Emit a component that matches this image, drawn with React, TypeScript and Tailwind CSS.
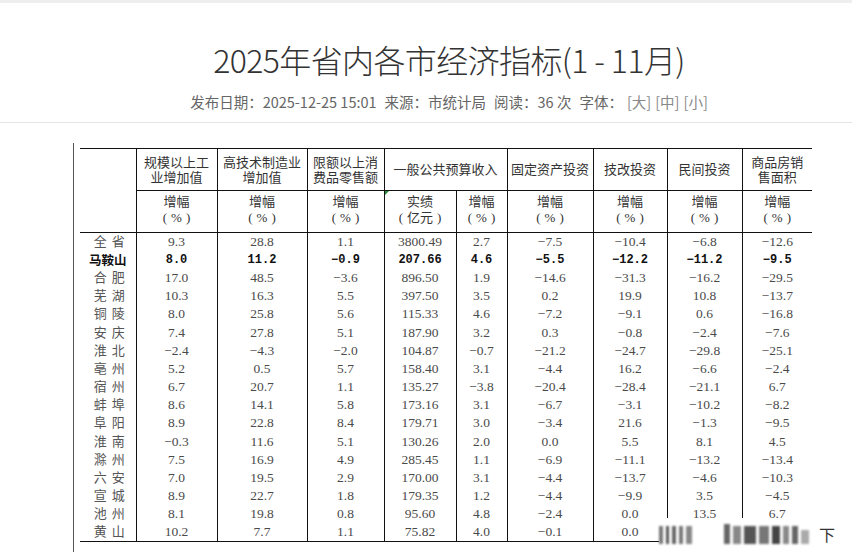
import React from 'react';

type Row = { city: string; vals: string[]; bold?: boolean };

const rows: Row[] = [
  { city: '全省', vals: ['9.3', '28.8', '1.1', '3800.49', '2.7', '−7.5', '−10.4', '−6.8', '−12.6'] },
  { city: '马鞍山', vals: ['8.0', '11.2', '−0.9', '207.66', '4.6', '−5.5', '−12.2', '−11.2', '−9.5'], bold: true },
  { city: '合肥', vals: ['17.0', '48.5', '−3.6', '896.50', '1.9', '−14.6', '−31.3', '−16.2', '−29.5'] },
  { city: '芜湖', vals: ['10.3', '16.3', '5.5', '397.50', '3.5', '0.2', '19.9', '10.8', '−13.7'] },
  { city: '铜陵', vals: ['8.0', '25.8', '5.6', '115.33', '4.6', '−7.2', '−9.1', '0.6', '−16.8'] },
  { city: '安庆', vals: ['7.4', '27.8', '5.1', '187.90', '3.2', '0.3', '−0.8', '−2.4', '−7.6'] },
  { city: '淮北', vals: ['−2.4', '−4.3', '−2.0', '104.87', '−0.7', '−21.2', '−24.7', '−29.8', '−25.1'] },
  { city: '亳州', vals: ['5.2', '0.5', '5.7', '158.40', '3.1', '−4.4', '16.2', '−6.6', '−2.4'] },
  { city: '宿州', vals: ['6.7', '20.7', '1.1', '135.27', '−3.8', '−20.4', '−28.4', '−21.1', '6.7'] },
  { city: '蚌埠', vals: ['8.6', '14.1', '5.8', '173.16', '3.1', '−6.7', '−3.1', '−10.2', '−8.2'] },
  { city: '阜阳', vals: ['8.9', '22.8', '8.4', '179.71', '3.0', '−3.4', '21.6', '−1.3', '−9.5'] },
  { city: '淮南', vals: ['−0.3', '11.6', '5.1', '130.26', '2.0', '0.0', '5.5', '8.1', '4.5'] },
  { city: '滁州', vals: ['7.5', '16.9', '4.9', '285.45', '1.1', '−6.9', '−11.1', '−13.2', '−13.4'] },
  { city: '六安', vals: ['7.0', '19.5', '2.9', '170.00', '3.1', '−4.4', '−13.7', '−4.6', '−10.3'] },
  { city: '宣城', vals: ['8.9', '22.7', '1.8', '179.35', '1.2', '−4.4', '−9.9', '3.5', '−4.5'] },
  { city: '池州', vals: ['8.1', '19.8', '0.8', '95.60', '4.8', '−2.4', '0.0', '13.5', '6.7'] },
  { city: '黄山', vals: ['10.2', '7.7', '1.1', '75.82', '4.0', '−0.1', '0.0', '', ''] },
];

const colWidths = [56, 81, 90, 77, 72, 51, 86, 74, 75, 70];

const serif = { fontFamily: '"Liberation Serif", "Noto Sans CJK SC", serif' };
const sans = { fontFamily: '"Noto Sans CJK SC", sans-serif' };

const Paren = ({ children }: { children: React.ReactNode }) => (
  <div className="flex justify-center items-center gap-[4px] leading-[15px]">
    <span>(</span>
    <span>{children}</span>
    <span>)</span>
  </div>
);

const Pct = () => (
  <div className="pb-[5px]">
    <div className="leading-[15px] mb-[1px]">增幅</div>
    <Paren>%</Paren>
  </div>
);

const App: React.FC = () => {
  return (
    <div className="w-[852px] h-[557px] bg-white overflow-hidden relative">
      <div className="h-[3px] bg-[#eeeeee]" />

      {/* Title block */}
      <div className="pl-[46px] pb-[10px] border-b border-[#e4e4e4] text-center" style={sans}>
        <h1 className="mt-[36px] h-[40px] leading-[40px] text-[32px] text-[#333] font-light tracking-[-0.6px]">
          2025年省内各市经济指标(1 - 11月)
        </h1>
        <div className="mt-[13px] h-[20px] leading-[20px] text-[14.5px] text-[#666] flex justify-center gap-[8px]">
          <span>发布日期：2025-12-25 15:01</span>
          <span>来源：市统计局</span>
          <span>阅读：36 次</span>
          <span className="flex gap-[4px]">
            <span>字体：</span>
            <span className="text-[#888]">[大]</span>
            <span className="text-[#888]">[中]</span>
            <span className="text-[#888]">[小]</span>
          </span>
        </div>
      </div>

      {/* Content */}
      <div className="ml-[73px] mt-[20px] pt-[5px] pl-[6px] border-l border-[#555] h-[409px]">
        <table className="border-collapse table-fixed text-[#4a4a4a]" style={{ ...serif, width: 732 }}>
          <colgroup>
            {colWidths.map((w, i) => (
              <col key={i} style={{ width: w }} />
            ))}
          </colgroup>
          <thead>
            <tr className="h-[42px] text-[13px] text-[#333] leading-[15px]">
              <th rowSpan={2} className="font-normal border-t border-b border-r border-[#111]" />
              <th className="font-normal border-t border-b border-r border-[#111]">
                规模以上工
                <br />
                业增加值
              </th>
              <th className="font-normal border-t border-b border-r border-[#111]">
                高技术制造业
                <br />
                增加值
              </th>
              <th className="font-normal border-t border-b border-r border-[#111]">
                限额以上消
                <br />
                费品零售额
              </th>
              <th colSpan={2} className="font-normal border-t border-b border-r border-[#111]">
                一般公共预算收入
              </th>
              <th className="font-normal border-t border-b border-r border-[#111]">固定资产投资</th>
              <th className="font-normal border-t border-b border-r border-[#111]">技改投资</th>
              <th className="font-normal border-t border-b border-r border-[#111]">民间投资</th>
              <th className="font-normal border-t border-b border-[#111]">
                商品房销
                <br />
                售面积
              </th>
            </tr>
            <tr className="h-[42px] text-[13px] text-[#333]">
              <th className="font-normal border-b border-r border-[#111]"><Pct /></th>
              <th className="font-normal border-b border-r border-[#111]"><Pct /></th>
              <th className="font-normal border-b border-r border-[#111]"><Pct /></th>
              <th className="font-normal border-b border-r border-[#111] relative">
                <span className="absolute left-0 top-0 w-0 h-0 border-t-[4px] border-r-[4px] border-t-[#2e8b3a] border-r-transparent" />
                <div className="pb-[5px]">
                  <div className="leading-[15px] mb-[1px]">实绩</div>
                  <Paren>亿元</Paren>
                </div>
              </th>
              <th className="font-normal border-b border-r border-[#111]"><Pct /></th>
              <th className="font-normal border-b border-r border-[#111]"><Pct /></th>
              <th className="font-normal border-b border-r border-[#111]"><Pct /></th>
              <th className="font-normal border-b border-r border-[#111]"><Pct /></th>
              <th className="font-normal border-b border-[#111]"><Pct /></th>
            </tr>
          </thead>
          <tbody>
            {rows.map((r, ri) => {
              const last = ri === rows.length - 1;
              return (
                <tr key={r.city} className="h-[18.2px] leading-[16px]">
                  <td className={`p-0 text-center border-r border-[#111] ${last ? 'border-b' : ''}`}>
                    {r.bold ? (
                      <span className="text-[12.5px] font-bold text-[#111]" style={sans}>
                        {r.city}
                      </span>
                    ) : (
                      <span className="flex justify-center gap-[5px] text-[13px] text-[#555] pl-[3px]">
                        <span>{r.city[0]}</span>
                        <span>{r.city[1]}</span>
                      </span>
                    )}
                  </td>
                  {r.vals.map((v, vi) => (
                    <td
                      key={vi}
                      className={`p-0 text-center ${vi < 8 ? 'border-r' : ''} ${last ? 'border-b' : ''} border-[#111] ${
                        r.bold ? 'text-[12px] font-bold text-[#111]' : 'text-[13.5px]'
                      }`}
                      style={r.bold ? { fontFamily: '"Liberation Mono", monospace' } : undefined}
                    >
                      {v}
                    </td>
                  ))}
                </tr>
              );
            })}
          </tbody>
        </table>
      </div>

      {/* blurred watermark over the bottom right */}
      <div className="absolute left-[659px] top-[518px] w-[180px] h-[26px] bg-white flex items-end">
        <div className="flex items-end h-[22px] gap-[3px] blur-[1px]">
          <div className="w-[4px] h-[18px] bg-[#777]" />
          <div className="w-[3px] h-[18px] bg-[#555]" />
          <div className="w-[4px] h-[18px] bg-[#666]" />
          <div className="w-[4px] h-[18px] bg-[#777]" />
          <div className="w-[6px] h-[18px] bg-[#888]" />
          <div className="w-[26px] h-[18px] bg-white" />
          <div className="w-[6px] h-[20px] bg-[#666]" />
          <div className="w-[8px] h-[18px] bg-[#888]" />
          <div className="w-[12px] h-[18px] bg-[#555]" />
          <div className="w-[10px] h-[18px] bg-[#777]" />
          <div className="w-[8px] h-[18px] bg-[#444]" />
          <div className="w-[6px] h-[18px] bg-[#888]" />
          <div className="w-[6px] h-[18px] bg-[#666]" />
          <div className="w-[8px] h-[14px] bg-[#aaa]" />
        </div>
        <span className="ml-[10px] mb-[2px] text-[16px] text-[#333] leading-none" style={sans}>
          下
        </span>
      </div>
    </div>
  );
};

export default App;
